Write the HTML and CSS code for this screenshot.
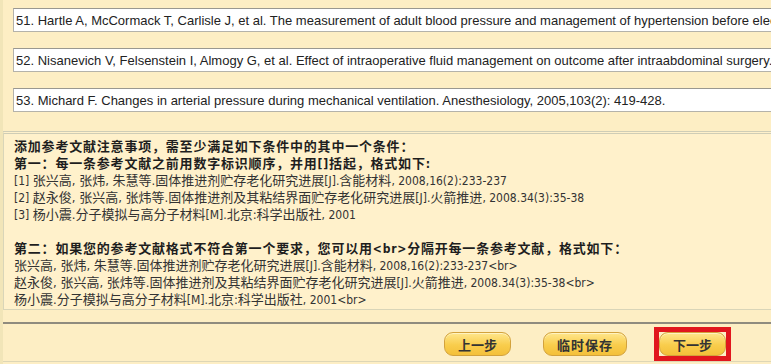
FILE: index.html
```html
<!DOCTYPE html>
<html lang="zh-CN">
<head>
    <meta charset="UTF-8">
    <meta name="viewport" content="width=device-width, initial-scale=1.0">
    <title>参考文献</title>
    <link rel="stylesheet" href="styles.css">
</head>
<body>
    <div class="page">
        <!-- reference inputs -->
        <div class="refs">
            <input class="ref-input" type="text" name="ref51" value="51. Hartle A, McCormack T, Carlisle J, et al. The measurement of adult blood pressure and management of hypertension before elective surgery. Anaesthesia, 2016,71(3): 326-337.">
            <input class="ref-input" type="text" name="ref52" value="52. Nisanevich V, Felsenstein I, Almogy G, et al. Effect of intraoperative fluid management on outcome after intraabdominal surgery. Anesthesiology, 2005,103(1): 25-32.">
            <input class="ref-input" type="text" name="ref53" value="53. Michard F. Changes in arterial pressure during mechanical ventilation. Anesthesiology, 2005,103(2): 419-428.">
        </div>

        <div class="notes">
            <p class="notes-title">添加参考文献注意事项，需至少满足如下条件中的其中一个条件：</p>
            <p class="notes-title">第一：每一条参考文献之前用数字标识顺序，并用<span class="en">[]</span>括起，格式如下<span class="en">:</span></p>
            <p><span class="en">[1] </span>张兴高, 张炜, 朱慧等.固体推进剂贮存老化研究进展<span class="en">[J].</span>含能材料<span class="en">, 2008,16(2):233-237</span></p>
            <p><span class="en">[2] </span>赵永俊, 张兴高, 张炜等.固体推进剂及其粘结界面贮存老化研究进展<span class="en">[J].</span>火箭推进<span class="en">, 2008.34(3):35-38</span></p>
            <p><span class="en">[3] </span>杨小震.分子模拟与高分子材料<span class="en">[M].</span>北京:科学出版社<span class="en">, 2001</span></p>
            <p>&nbsp;</p>
            <p class="notes-title">第二：如果您的参考文献格式不符合第一个要求，您可以用<span class="en">&lt;br&gt;</span>分隔开每一条参考文献，格式如下：</p>
            <p>张兴高, 张炜, 朱慧等.固体推进剂贮存老化研究进展<span class="en">[J].</span>含能材料<span class="en">, 2008,16(2):233-237&lt;br&gt;</span></p>
            <p>赵永俊, 张兴高, 张炜等.固体推进剂及其粘结界面贮存老化研究进展<span class="en">[J].</span>火箭推进<span class="en">, 2008.34(3):35-38&lt;br&gt;</span></p>
            <p>杨小震.分子模拟与高分子材料<span class="en">[M].</span>北京:科学出版社<span class="en">, 2001&lt;br&gt;</span></p>
        </div>

        <div class="actions">
            <button class="btn" type="button">上一步</button>
            <button class="btn btn-wide" type="button">临时保存</button>
            <span class="current">
                <button class="btn" type="submit">下一步</button>
            </span>
        </div>
    </div>
</body>
</html>
```

FILE: styles.css
```css
html, body {
    margin: 0;
    overflow: hidden;
}

body {
    background: #fdeec4;
    font-family: "DejaVu Sans Condensed", "Noto Sans CJK SC", sans-serif;
    color: #333;
}

.page {
    border-left: 3px solid #f1e5b8;
    height: 364px;
}

.refs {
    display: flex;
    flex-direction: column;
    gap: 16px;
    padding: 8px 0 0 10px;
}

.ref-input {
    box-sizing: border-box;
    width: 800px;
    height: 24px;
    padding: 0 2px;
    border: 1px solid #b4b2aa;
    border-top-color: #9a9890;
    background: #fff;
    font-family: "Liberation Sans", Arial, sans-serif;
    font-size: 13px;
    color: #222;
}

.notes {
    margin-top: 19px;
    padding: 4px 10px 1px;
    border-top: 3px double #cfcdb6;
    border-left: 1px solid #d9d5b8;
    border-bottom: 1px solid #d9d5b8;
    background: #fff1cb;
    font-size: 13px;
    line-height: 17px;
    white-space: nowrap;
}

.notes p {
    margin: 0;
    height: 17px;
}

.notes .en {
    font-size: 12px;
    line-height: 1;
}

.notes .notes-title {
    font-weight: bold;
    color: #1e1e1e;
    letter-spacing: 0.8px;
}

.actions {
    display: flex;
    justify-content: flex-end;
    align-items: center;
    gap: 32px;
    margin-top: 12px;
    padding: 3px 40px 0 0;
    border-top: 2px solid #8f8b7e;
    border-bottom: 1px solid #ddd6b6;
}

.btn {
    height: 24px;
    padding: 0 13px;
    border: 1px solid #d3a23c;
    border-radius: 9px;
    background: linear-gradient(#ffe68c, #f9cd4c 55%, #f4c03a);
    box-shadow: inset 0 1px 0 #fff3c0;
    font-family: "Noto Sans CJK SC", sans-serif;
    font-size: 13px;
    font-weight: bold;
    color: #333;
    cursor: pointer;
}

.btn-wide {
    letter-spacing: 1px;
}

.current {
    display: flex;
    margin-left: -5px;
    border: 5px solid #e1161d;
}
```
